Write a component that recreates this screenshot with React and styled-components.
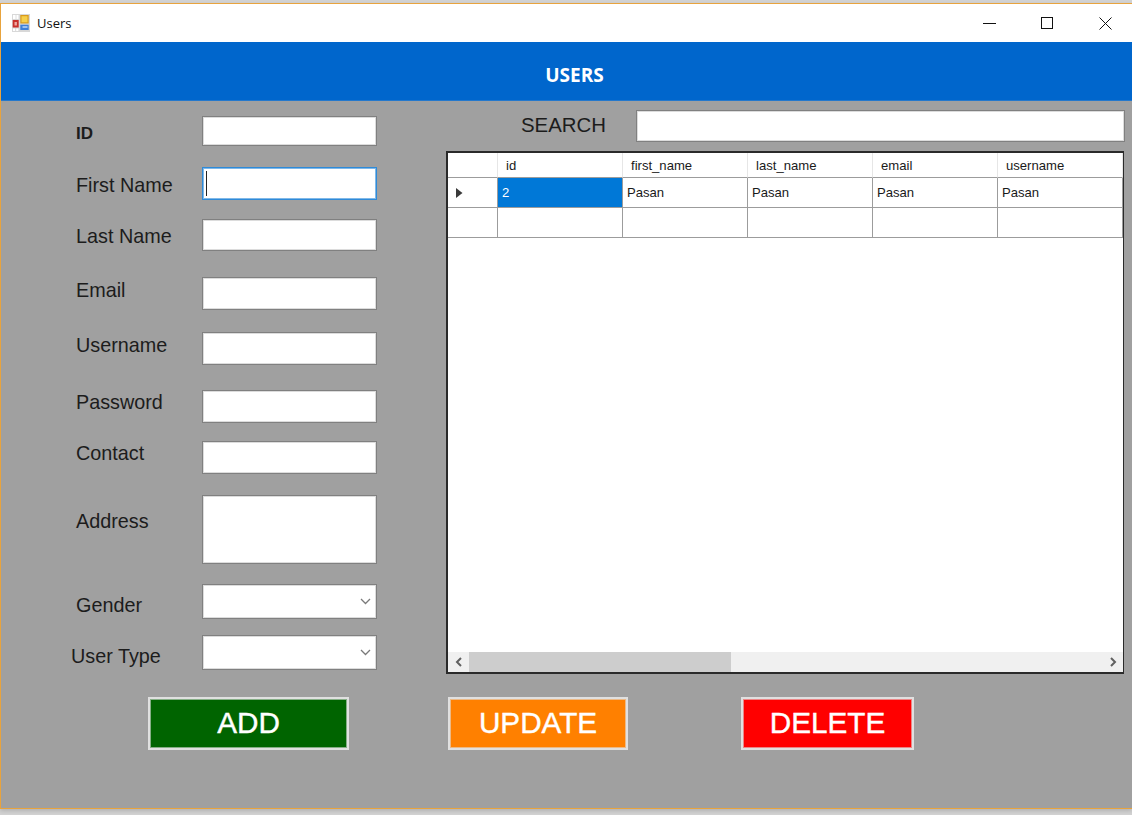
import React from "react";
import styled, { createGlobalStyle } from "styled-components";

const GlobalStyle = createGlobalStyle`
  html, body {
    margin: 0;
    padding: 0;
    height: 815px;
    overflow: hidden;
    background: #d2d2d2;
    font-family: "Liberation Sans", Arial, sans-serif;
  }
`;

const fields = [
  { label: "ID", height: 30, top: 15, labelTop: 6, bold: true },
  { label: "First Name", height: 33, top: 21, labelTop: 6, focused: true },
  { label: "Last Name", height: 32, top: 19, labelTop: 5 },
  { label: "Email", height: 33, top: 26, labelTop: 1 },
  { label: "Username", height: 33, top: 22, labelTop: 1 },
  { label: "Password", height: 33, top: 25, labelTop: 0 },
  { label: "Contact", height: 33, top: 18, labelTop: 0 },
  { label: "Address", height: 69, top: 21, labelTop: 14 },
  { label: "Gender", height: 35, top: 20, labelTop: 9, select: true },
  { label: "User Type", height: 35, top: 16, labelTop: 9, select: true, outdent: true },
];

const columns = ["id", "first_name", "last_name", "email", "username"];

const Window = styled.div`
  margin-top: 3px;
  height: 806px;
  box-sizing: border-box;
  display: flex;
  flex-direction: column;
  border: solid #e8a33d;
  border-width: 1px 0 1px 1px;
  box-shadow: 0 2px 4px rgba(0, 0, 0, 0.15);
  overflow: hidden;
`;

const TitleBar = styled.div`
  height: 38px;
  flex: none;
  display: flex;
  align-items: center;
  background: #fff;
  padding-left: 11px;
  margin-right: -2px;
`;

const TitleText = styled.span`
  flex: 1;
  margin-left: 7px;
  font-family: "Open Sans", sans-serif;
  font-size: 13px;
  color: #111;
`;

const WinButton = styled.div`
  width: 58px;
  height: 38px;
  display: flex;
  align-items: center;
  justify-content: center;
`;

const Banner = styled.div`
  height: 59px;
  flex: none;
  display: flex;
  align-items: center;
  justify-content: center;
  box-sizing: border-box;
  background: #0066cc;
  border-bottom: 1px solid #2478cc;
  font-family: "Open Sans", sans-serif;
  font-weight: 700;
  font-size: 19px;
  color: #fff;
  padding-top: 8px;
  padding-left: 16px;
`;

const Body = styled.div`
  flex: 1;
  background: #a0a0a0;
  display: flex;
  flex-direction: column;
`;

const Main = styled.div`
  display: flex;
  height: 573px;
`;

const Form = styled.div`
  width: 445px;
  flex: none;
  box-sizing: border-box;
  padding-left: 69px;
`;

const Row = styled.div`
  display: flex;
  align-items: flex-start;
  margin-top: ${(p) => p.$top}px;
`;

const Label = styled.label`
  width: 132px;
  box-sizing: border-box;
  padding-left: ${(p) => (p.$outdent ? 1 : 6)}px;
  margin-top: ${(p) => p.$top}px;
  font-size: ${(p) => (p.$bold ? 17 : 19.8)}px;
  font-weight: ${(p) => (p.$bold ? 700 : 400)};
  line-height: 24px;
  color: #1c1c1c;
`;

const Field = styled.div`
  position: relative;
  width: 175px;
  height: ${(p) => p.$height}px;
  box-sizing: border-box;
  background: #fff;
  border: 1px solid ${(p) => (p.$focused ? "#2f8ad8" : "#808080")};
  box-shadow: inset 0 0 0 1px ${(p) => (p.$focused ? "#7fb8e8" : "#dcdcdc")};
  display: flex;
  align-items: center;
  justify-content: flex-end;
  padding-right: 5px;
`;

const Caret = styled.span`
  position: absolute;
  left: 3px;
  top: 3px;
  width: 1px;
  height: 25px;
  background: #222;
`;

const Side = styled.div`
  flex: 1;
  display: flex;
  flex-direction: column;
  padding-right: 8px;
`;

const SearchRow = styled.div`
  display: flex;
  align-items: center;
  height: 32px;
  margin-top: 9px;
  margin-right: -1px;
`;

const SearchLabel = styled.span`
  width: 190px;
  box-sizing: border-box;
  padding: 0 0 2px 75px;
  font-size: 20.4px;
  color: #1c1c1c;
`;

const SearchInput = styled.div`
  flex: 1;
  height: 32px;
  box-sizing: border-box;
  background: #fff;
  border: 1px solid #808080;
  box-shadow: inset 0 0 0 1px #dcdcdc;
`;

const Grid = styled.div`
  margin-top: 9px;
  flex: 1;
  box-sizing: border-box;
  display: flex;
  flex-direction: column;
  background: #fff;
  border: 2px solid #2a2a2a;
  border-width: 2px 1px 2px 2px;
  overflow: hidden;
`;

const Rows = styled.div`
  flex: 1;
  display: grid;
  grid-template-columns: 50px repeat(5, 125px);
  grid-auto-rows: min-content;
`;

const Cell = styled.div`
  height: ${(p) => p.$height}px;
  box-sizing: border-box;
  display: flex;
  align-items: center;
  padding-left: ${(p) => p.$pad ?? 4}px;
  font-size: 13.1px;
  color: ${(p) => (p.$selected ? "#fff" : "#1a1a1a")};
  background: ${(p) => (p.$selected ? "#0078d7" : "#fff")};
  border-bottom: 1px solid #9c9c9c;
  border-right: 1px solid ${(p) => (p.$light ? "#e6e6e6" : "#9c9c9c")};
`;

const Scrollbar = styled.div`
  height: 20px;
  flex: none;
  display: flex;
  align-items: center;
  background: #f0f0f0;
`;

const ScrollArrow = styled.div`
  width: 21px;
  flex: none;
  display: flex;
  justify-content: center;
`;

const ScrollThumb = styled.div`
  width: 262px;
  height: 20px;
  flex: none;
  background: #cdcdcd;
`;

const ScrollRest = styled.div`
  flex: 1;
`;

const Actions = styled.div`
  display: flex;
  align-items: flex-start;
  margin-top: 23px;
  padding-left: 147px;
`;

const ActionButton = styled.div`
  width: ${(p) => p.$width}px;
  height: 53px;
  margin-right: ${(p) => p.$gap}px;
  box-sizing: border-box;
  display: flex;
  align-items: center;
  justify-content: center;
  padding-bottom: 2px;
  background: ${(p) => p.$color};
  border: 2px solid #e0e0e0;
  box-shadow: inset 0 0 0 1px rgba(224, 224, 224, 0.6);
  color: #fff;
  font-size: 29.7px;
  -webkit-text-stroke: 0.4px #fff;
`;

const AppIcon = () => (
  <svg width="18" height="18" viewBox="0 0 18 18">
    <rect width="18" height="18" fill="#d8d8d8" />
    <rect x="1" y="1" width="5.5" height="4" fill="#fff" />
    <rect x="3.6" y="1" width="0.8" height="4" fill="#d8d8d8" />
    <rect x="0.7" y="6" width="6" height="7.5" fill="#c9302c" />
    <rect x="2.5" y="8" width="2.4" height="3.5" fill="#f0a8a0" />
    <rect x="1" y="14.5" width="2.2" height="2.5" fill="#fff" />
    <rect x="4.2" y="14.5" width="2.2" height="2.5" fill="#fff" />
    <rect x="8.3" y="1" width="8.4" height="8.5" fill="#d99a1c" />
    <rect x="9.5" y="2.2" width="6" height="6.1" fill="#f6cf4a" />
    <rect x="8.3" y="10.7" width="8.4" height="5.3" fill="#3f7fd8" />
    <rect x="10.5" y="12" width="5" height="2" fill="#9cc0ee" />
  </svg>
);

const Minimize = () => (
  <svg width="13" height="13" viewBox="0 0 13 13">
    <path d="M0 6.5H13" stroke="#111" fill="none" />
  </svg>
);

const Maximize = () => (
  <svg width="12" height="12" viewBox="0 0 12 12">
    <rect x="0.5" y="0.5" width="11" height="11" stroke="#111" fill="none" />
  </svg>
);

const Close = () => (
  <svg width="13" height="13" viewBox="0 0 13 13">
    <path d="M0.5 0.5L12.5 12.5M12.5 0.5L0.5 12.5" stroke="#111" fill="none" />
  </svg>
);

const SelectChevron = () => (
  <svg width="11" height="7" viewBox="0 0 11 7">
    <path d="M1 1L5.5 5.5L10 1" stroke="#7a7a7a" strokeWidth="1.3" fill="none" />
  </svg>
);

const ScrollChevron = ({ flip }) => (
  <svg width="8" height="10" viewBox="0 0 8 10">
    <path d={flip ? "M2 1L6 5L2 9" : "M6 1L2 5L6 9"} stroke="#606060" strokeWidth="2" fill="none" />
  </svg>
);

const RowPointer = () => (
  <svg width="7" height="10" viewBox="0 0 7 10">
    <path d="M0 0L6.5 5L0 10Z" fill="#3a3a3a" />
  </svg>
);

export default function App() {
  return (
    <>
      <GlobalStyle />
      <Window>
        <TitleBar>
          <AppIcon />
          <TitleText>Users</TitleText>
          <WinButton><Minimize /></WinButton>
          <WinButton><Maximize /></WinButton>
          <WinButton><Close /></WinButton>
        </TitleBar>
        <Banner>USERS</Banner>
        <Body>
          <Main>
            <Form>
              {fields.map((f) => (
                <Row key={f.label} $top={f.top}>
                  <Label $top={f.labelTop} $bold={f.bold} $outdent={f.outdent}>
                    {f.label}
                  </Label>
                  <Field $height={f.height} $focused={f.focused}>
                    {f.focused && <Caret />}
                    {f.select && <SelectChevron />}
                  </Field>
                </Row>
              ))}
            </Form>
            <Side>
              <SearchRow>
                <SearchLabel>SEARCH</SearchLabel>
                <SearchInput />
              </SearchRow>
              <Grid>
                <Rows>
                  <Cell $height={25} $pad={8} $light />
                  {columns.map((c) => (
                    <Cell key={c} $height={25} $pad={8} $light>{c}</Cell>
                  ))}
                  <Cell $height={30} $pad={8}>
                    <RowPointer />
                  </Cell>
                  <Cell $height={30} $selected>2</Cell>
                  <Cell $height={30}>Pasan</Cell>
                  <Cell $height={30}>Pasan</Cell>
                  <Cell $height={30}>Pasan</Cell>
                  <Cell $height={30}>Pasan</Cell>
                  {[0, 1, 2, 3, 4, 5].map((i) => (
                    <Cell key={i} $height={30} />
                  ))}
                </Rows>
                <Scrollbar>
                  <ScrollArrow><ScrollChevron /></ScrollArrow>
                  <ScrollThumb />
                  <ScrollRest />
                  <ScrollArrow><ScrollChevron flip /></ScrollArrow>
                </Scrollbar>
              </Grid>
            </Side>
          </Main>
          <Actions>
            <ActionButton $color="#006400" $width={201} $gap={99}>ADD</ActionButton>
            <ActionButton $color="#ff8000" $width={180} $gap={113}>UPDATE</ActionButton>
            <ActionButton $color="#ff0000" $width={173} $gap={0}>DELETE</ActionButton>
          </Actions>
        </Body>
      </Window>
    </>
  );
}
